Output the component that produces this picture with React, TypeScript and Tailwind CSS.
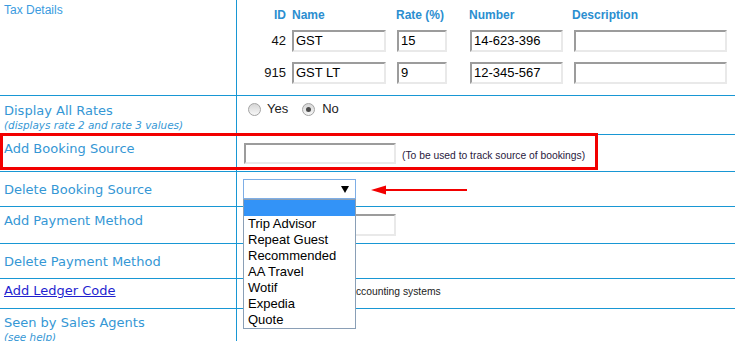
import React from "react";

const line = "border-[#1897d4]";

const TextBox = ({ value, w, h = 22 }: { value?: string; w: number; h?: number }) => (
  <div
    className="bg-white border-2 border-t-[#9c9c9c] border-l-[#9c9c9c] border-r-[#e9e9e9] border-b-[#e9e9e9] pl-[2px] text-[13px] text-black font-['Liberation_Sans',Arial,sans-serif] flex items-center"
    style={{ width: w, height: h }}
  >
    {value}
  </div>
);

const Radio = ({ checked }: { checked?: boolean }) => (
  <span className="w-[13px] h-[13px] rounded-full border border-[#a3a3a3] bg-gradient-to-b from-[#d6d6d6] to-[#f7f7f7] flex items-center justify-center">
    {checked && <span className="w-[5px] h-[5px] rounded-full bg-[#4a4a4a]" />}
  </span>
);

const Row = ({
  h,
  left,
  right,
  leftPad,
}: {
  h: number;
  left: React.ReactNode;
  right?: React.ReactNode;
  leftPad: string;
}) => (
  <div className={`flex border-b ${line}`} style={{ height: h }}>
    <div className={`w-[237px] shrink-0 border-r ${line} pl-[4px] ${leftPad}`}>{left}</div>
    <div className="flex-1 relative">{right}</div>
  </div>
);

const Label = ({ children }: { children: React.ReactNode }) => (
  <div className="text-[13px] leading-[16px] text-[#3597d5]">{children}</div>
);

const sources = ["Trip Advisor", "Repeat Guest", "Recommended", "AA Travel", "Wotif", "Expedia", "Quote"];

const taxes = [
  { id: "42", name: "GST", rate: "15", number: "14-623-396" },
  { id: "915", name: "GST LT", rate: "9", number: "12-345-567" },
];

export default function App() {
  return (
    <div className="relative w-[735px] h-[341px] overflow-hidden bg-white font-['DejaVu_Sans',Verdana,sans-serif]">
      {/* tax details */}
      <div className={`flex border-b ${line} h-[96px]`}>
        <div className={`w-[237px] shrink-0 border-r ${line} pl-[4px] pt-[2px]`}>
          <div className="text-[12px] leading-[16px] text-[#3a9be0] font-['Liberation_Sans',Arial,sans-serif]">
            Tax Details
          </div>
        </div>
        <div className="flex-1 pt-[7px] font-['Liberation_Sans',Arial,sans-serif]">
          <div className="flex text-[12px] leading-[16px] font-bold text-[#2b8ed0]">
            <div className="w-[49px] text-right">ID</div>
            <div className="ml-[6px] w-[94px]">Name</div>
            <div className="ml-[10px] w-[50px]">Rate (%)</div>
            <div className="ml-[23px] w-[93px]">Number</div>
            <div className="ml-[10px]">Description</div>
          </div>
          {taxes.map((t, i) => (
            <div key={t.id} className={`flex items-center ${i === 0 ? "mt-[7px]" : "mt-[10px]"}`}>
              <div className="w-[49px] text-right text-[13px] text-[#111]">{t.id}</div>
              <div className="ml-[6px]">
                <TextBox value={t.name} w={94} />
              </div>
              <div className="ml-[11px]">
                <TextBox value={t.rate} w={50} />
              </div>
              <div className="ml-[23px]">
                <TextBox value={t.number} w={93} />
              </div>
              <div className="ml-[11px]">
                <TextBox w={153} />
              </div>
            </div>
          ))}
        </div>
      </div>

      <Row
        h={39}
        leftPad="pt-[7px]"
        left={
          <>
            <Label>Display All Rates</Label>
            <div className="text-[10.4px] leading-[12px] italic text-[#3597d5]">
              (displays rate 2 and rate 3 values)
            </div>
          </>
        }
        right={
          <div className="flex items-center pt-[6px] pl-[11px] text-[13px] leading-[14px] text-[#222] font-['Liberation_Sans',Arial,sans-serif]">
            <Radio />
            <span className="ml-[6px]">Yes</span>
            <span className="ml-[14px]">
              <Radio checked />
            </span>
            <span className="ml-[7px]">No</span>
          </div>
        }
      />

      <Row
        h={37}
        leftPad="pt-[6px]"
        left={<Label>Add Booking Source</Label>}
        right={
          <div className="flex items-end pt-[8px] pl-[7px]">
            <TextBox w={152} h={21} />
            <span className="ml-[6px] mb-[1px] text-[10.3px] text-[#2a2040] font-['Liberation_Sans',Arial,sans-serif]">
              (To be used to track source of bookings)
            </span>
          </div>
        }
      />

      <Row
        h={35}
        leftPad="pt-[10px]"
        left={<Label>Delete Booking Source</Label>}
        right={
          <div className="pt-[7px] pl-[6px] relative z-10">
            <div className="relative w-[113px] h-[20px] border border-[#7eaee6] bg-white">
              <svg className="absolute right-[6px] top-[6px]" width="8" height="7" viewBox="0 0 8 7">
                <path d="M0 0 H8 L4 7 Z" fill="#000" />
              </svg>
              <div className="absolute left-[-1px] top-[19px] w-[113px] bg-white border border-[#8a9fb6] text-[13px] leading-[16px] text-black font-['Liberation_Sans',Arial,sans-serif]">
                <div className="h-[16px] bg-[#3393f7]" />
                {sources.map((s) => (
                  <div key={s} className="pl-[4px]">
                    {s}
                  </div>
                ))}
              </div>
            </div>
            <svg className="absolute left-[134px] top-[13px]" width="98" height="10" viewBox="0 0 98 10">
              <path d="M0 5 L15 0.5 L15 9.5 Z" fill="#f20000" />
              <rect x="14" y="4" width="82" height="2" fill="#f20000" />
            </svg>
          </div>
        }
      />

      <Row
        h={37}
        leftPad="pt-[6px]"
        left={<Label>Add Payment Method</Label>}
        right={
          <div className="pt-[7px] pl-[6px]">
            <TextBox w={153} />
          </div>
        }
      />

      <Row h={35} leftPad="pt-[10px]" left={<Label>Delete Payment Method</Label>} />

      <Row
        h={30}
        leftPad="pt-[4px]"
        left={
          <a className="block text-[13px] leading-[16px] text-[#1f1fd0] underline" href="#">
            Add Ledger Code
          </a>
        }
        right={
          <div className="pt-[6px] text-[10.3px] leading-[14px] text-[#222] font-['Liberation_Sans',Arial,sans-serif]">
            <span className="ml-[52px]">(for export to </span>
            <span>accounting systems</span>
          </div>
        }
      />

      <Row
        h={40}
        leftPad="pt-[6px]"
        left={
          <>
            <Label>Seen by Sales Agents</Label>
            <div className="text-[10.4px] leading-[12px] italic text-[#3597d5]">(see help)</div>
          </>
        }
      />

      {/* highlight annotation */}
      <div className="absolute left-0 top-[133px] w-[598px] h-[37px] border-[3px] border-[#f20000] pointer-events-none" />
    </div>
  );
}
